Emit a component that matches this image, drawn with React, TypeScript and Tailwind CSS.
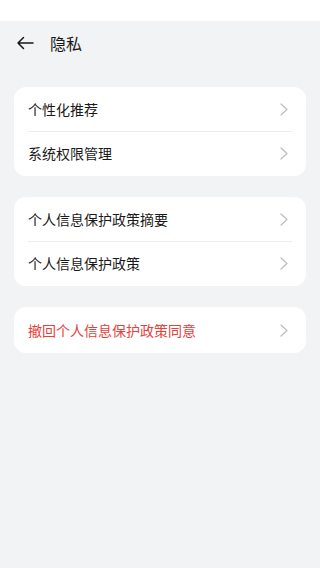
import React from "react";

const Chevron = () => (
  <svg width="8" height="13" viewBox="0 0 8 13" fill="none" className="shrink-0">
    <path d="M1 1l6 5.5L1 12" stroke="#bcbcbc" strokeWidth="1.2" strokeLinecap="round" strokeLinejoin="round" />
  </svg>
);

const Row = ({ label, red, divider, h = "h-[44.5px]" }: { label: string; red?: boolean; divider?: boolean; h?: string }) => (
  <div className={`relative flex items-center justify-between px-[14px] ${h}`}>
    <span className={`text-[14px] ${red ? "text-[#e8403a]" : "text-[#191919]"}`}>{label}</span>
    <div className="pr-[4px]">
      <Chevron />
    </div>
    {divider && <div className="absolute bottom-0 left-[14px] right-[14px] h-px bg-[#ededed]" />}
  </div>
);

export default function App() {
  return (
    <div
      className="w-[320px] h-[568px] bg-[#f1f3f5] flex flex-col"
      style={{ fontFamily: '"Noto Sans CJK SC", "Noto Sans", sans-serif' }}
    >
      <div className="h-[21px] bg-white shrink-0" />
      <div className="h-[44px] flex items-center pl-[16px] shrink-0">
        <svg width="18" height="14" viewBox="0 0 18 14" fill="none">
          <path d="M17 7H2M7.5 1.5L2 7l5.5 5.5" stroke="#191919" strokeWidth="1.5" strokeLinecap="round" strokeLinejoin="round" />
        </svg>
        <span className="ml-[16px] text-[16px] text-[#191919]">隐私</span>
      </div>
      <div className="flex flex-col gap-[21px] px-[14px] pt-[22px]">
        <div className="bg-white rounded-[12px] flex flex-col">
          <Row label="个性化推荐" divider />
          <Row label="系统权限管理" />
        </div>
        <div className="bg-white rounded-[12px] flex flex-col">
          <Row label="个人信息保护政策摘要" divider />
          <Row label="个人信息保护政策" />
        </div>
        <div className="bg-white rounded-[12px] flex flex-col">
          <Row label="撤回个人信息保护政策同意" red h="h-[46px]" />
        </div>
      </div>
    </div>
  );
}
